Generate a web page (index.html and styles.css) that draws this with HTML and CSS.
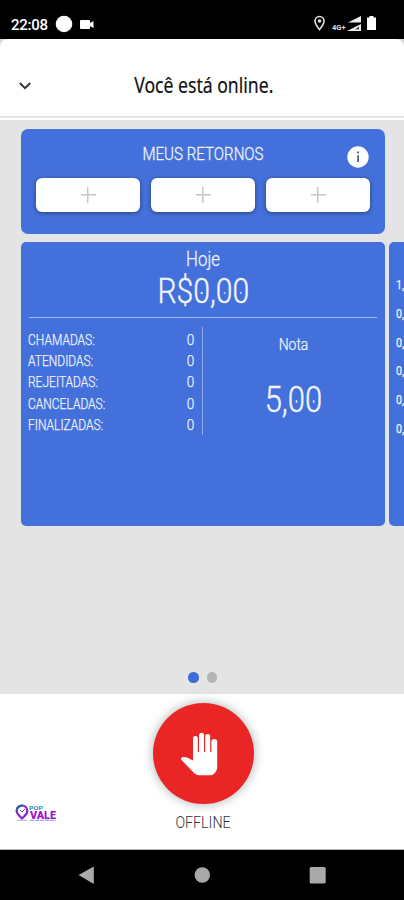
FILE: index.html
```html
<!DOCTYPE html>
<html lang="pt-BR">
<head>
<meta charset="utf-8">
<meta name="viewport" content="width=device-width, initial-scale=1">
<title>Você está online</title>
<link rel="stylesheet" href="styles.css">
</head>
<body>
<div class="phone">
  <div class="status">
    <span class="clock">22:08</span>
    <svg class="status-left" width="40" height="20" viewBox="0 0 40 20"><circle cx="9" cy="10" r="8.3" fill="#fff"/><path d="M26 6h8q1 0 1 1v2l3.500-2v7l-3.500-2v2q0 1-1 1h-8q-1 0-1-1V7q0-1 1-1z" fill="#fff"/></svg>
    <svg class="status-right" width="66" height="18" viewBox="0 0 66 18"><path d="M5.500 1.500a4.500 4.500 0 0 0-4.500 4.500c0 3.200 4.500 8.500 4.500 8.500s4.500-5.300 4.500-8.500a4.500 4.500 0 0 0-4.500-4.500z" fill="none" stroke="#e4e4e4" stroke-width="1.600"/><circle cx="5.500" cy="6" r="1.800" fill="#ddd"/><text class="net" x="18" y="15">4G+</text><path d="M34 7.500 47 1v6.500z" fill="#eee"/><path d="M33 16 47 9v7z" fill="#eee"/><path d="M41 14.500l4-3v3z" fill="#444"/><path d="M53 2.500h2.500V1h4v1.500H62V15h-9z" fill="#fff"/></svg>
  </div>
  <header class="header">
    <svg class="chevron" width="14" height="10" viewBox="0 0 14 10"><path d="M.8 2 6 7.200 11.200 2" fill="none" stroke="#333" stroke-width="1.900"/></svg>
    <h1 class="title">Você está online.</h1>
  </header>
  <main class="content">
    <section class="returns">
      <h2 class="returns-title">MEUS RETORNOS</h2>
      <svg class="info" width="22" height="22" viewBox="0 0 22 22"><circle cx="11" cy="11" r="10.700" fill="#fff"/><path d="M10.200 5.500h1.800v2h-1.800zM10.200 9.200h1.800v6.800h-1.800z" fill="#53658f"/></svg>
      <div class="slots">
        <div class="slot"><i class="plus"></i></div>
        <div class="slot"><i class="plus"></i></div>
        <div class="slot"><i class="plus"></i></div>
      </div>
    </section>
    <div class="carousel">
      <section class="today">
        <h2 class="day">Hoje</h2>
        <div class="amount"><span class="num">R$<b>0</b>,<b>0</b><b>0</b></span></div>
        <div class="details">
          <dl class="counts">
            <div><dt>CHAMADAS:</dt><dd>0</dd></div>
            <div><dt>ATENDIDAS:</dt><dd>0</dd></div>
            <div><dt>REJEITADAS:</dt><dd>0</dd></div>
            <div><dt>CANCELADAS:</dt><dd>0</dd></div>
            <div><dt>FINALIZADAS:</dt><dd>0</dd></div>
          </dl>
          <div class="rating"><div class="label">Nota</div><div class="score"><span class="num">5,<b>0</b><b>0</b></span></div></div>
        </div>
      </section>
      <section class="chart"><span>1,0</span><span>0,8</span><span>0,6</span><span>0,4</span><span>0,2</span><span>0,0</span></section>
    </div>
    <div class="pager"><i class="dot active"></i><i class="dot"></i></div>
  </main>
  <footer class="footer">
    <div class="power">
      <svg width="40" height="44" viewBox="0 0 40 44"><path d="M13 26V6.500a2.400 2.400 0 0 1 4.800 0V20h1.200V3.300a2.500 2.500 0 0 1 5 0V20h1.200V4.500a2.500 2.500 0 0 1 5 0V20h1.200V10a2.900 2.900 0 0 1 5.800 0V35q0 4-3.500 7l-2 1.300H18.500q-2.500-.3-4.500-2.300L1.300 27.800q-1-2.300 1.700-2.800 2.500-.2 4.500.8l5.500 2.600z" fill="#fff"/></svg>
    </div>
    <div class="state">OFFLINE</div>
    <svg class="logo" width="44" height="20" viewBox="0 0 44 20"><path d="M8 1.500a5.300 5.300 0 0 0-5.300 5.300Q2.700 10 8 14.500q5.300-4.500 5.300-7.700A5.300 5.300 0 0 0 8 1.500z" fill="none" stroke="#8a25c8" stroke-width="2.200"/><path d="M2.700 7a5.200 5.200 0 0 1 6-5.300" fill="none" stroke="#2b62b5" stroke-width="2.200"/><path d="M6 6l2 2 3-3" fill="none" stroke="#7b54b5"/><path d="M3 16.300h10" stroke="#9fb4e0" stroke-width="1"/><text class="logo-top" x="15" y="5.800" textLength="14" lengthAdjust="spacingAndGlyphs">POP</text><text class="logo-main" x="16" y="14.800" textLength="26" lengthAdjust="spacingAndGlyphs">VALE</text><path d="M16 16.300h26" stroke="#8b8be0" stroke-dasharray="4 1"/></svg>
  </footer>
  <nav class="nav">
    <svg width="404" height="50" viewBox="0 0 404 50"><path d="M78.500 25 93.800 16.500V34z" fill="#a9a9a9"/><circle cx="202.300" cy="25" r="7.700" fill="#a9a9a9"/><rect x="309.700" y="17" width="16" height="16.500" rx="1.500" fill="#a9a9a9"/></svg>
  </nav>
</div>
</body>
</html>
```
FILE: styles.css
```css
* { box-sizing: border-box; }
body { margin: 0; background: #000; font-family: Roboto, sans-serif; }
h1, h2, dl, dd { margin: 0; font-weight: 300; }
svg { display: block; flex: none; }
.phone { width: 404px; height: 900px; display: flex; flex-direction: column; overflow: hidden; background: #d9d9d9; }

.status { height: 39px; padding: 9px 24px 0 11px; display: flex; align-items: center; background: #000; color: #fff; }
.clock { width: 37px; margin-right: 7px; font-size: 15px; line-height: 18px; padding-top: 1px; font-weight: 500; letter-spacing: -.25px; }
.status-right { margin-left: auto; }
.net { font: 700 7.500px Roboto, sans-serif; fill: #ddd; }

.header { height: 81px; padding: 2px 19px 0; display: flex; align-items: center; background: linear-gradient(#fff 77px, #e6e6e6 77px 79px, #fff 79px); border-radius: 8px 8px 0 0; }
.chevron { margin-top: 11px; }
.title { flex: 1; padding-right: 13px; margin-top: 6px; text-align: center; font-family: "Noto Sans", sans-serif; font-size: 22px; line-height: 30px; font-weight: 400; color: #111; transform: scaleX(.8); -webkit-text-stroke: .2px; }

.content { height: 574px; padding: 9px 0 0 21px; background: #e4e4e4; display: flex; flex-direction: column; color: #f1f5ff; }
.returns { position: relative; width: 364px; height: 105px; padding: 12px 15px 0; border-radius: 7px; background: #4470db; }
.returns-title { font-size: 19px; line-height: 26px; text-align: center; transform: scaleX(.795); -webkit-text-stroke: .3px; }
.info { position: absolute; right: 16px; top: 17px; }
.slots { display: flex; gap: 11px; margin-top: 11px; }
.slot { flex: 1; height: 34px; border-radius: 6px; background: #fff; box-shadow: 0 1px 4px rgba(30, 40, 70, .65); display: grid; place-items: center; }
.plus { width: 15px; height: 16px; background: linear-gradient(#c6c6c6, #c6c6c6) center / 15px 1.500px no-repeat, linear-gradient(#c6c6c6, #c6c6c6) center / 1.500px 16px no-repeat; }

.carousel { display: flex; gap: 4px; margin-top: 8px; overflow: hidden; }
.today { flex: none; width: 364px; height: 284px; padding: 4px 8px 0; border-radius: 5px; background: #4470db; }
.day { font-size: 20px; line-height: 26px; text-align: center; transform: scaleX(.84); -webkit-text-stroke: .3px; }
.amount { height: 46px; border-bottom: 1.500px solid #a5bcf0; text-align: center; font-size: 35px; line-height: 40px; font-weight: 300; }
.num { display: inline-block; transform: scaleX(.86); -webkit-text-stroke: .4px; }
.num b { position: relative; font-weight: 300; }
.num b::after { content: ""; position: absolute; left: calc(50% - 1px); top: 50%; width: 2.500px; height: 2.500px; border-radius: 50%; background: #dce7ff; }
.details { display: flex; padding-top: 9px; }
.counts { width: 174px; height: 108px; padding: 3px 8px 0 0; border-right: 1.500px solid #8eabea; font-size: 15px; line-height: 21.200px; -webkit-text-stroke: .25px; }
.counts div { display: flex; justify-content: space-between; }
.counts dt { transform: translateX(-1px) scaleX(.8); transform-origin: left; font-weight: 300; }
.counts dd { transform: scaleX(.9); transform-origin: right; }
.rating { flex: 1; text-align: center; padding: 7px 0 0 7px; }
.label { font-size: 16px; line-height: 22px; font-weight: 300; transform: scaleX(.87); -webkit-text-stroke: .25px; }
.score { margin-top: 22px; font-size: 36px; line-height: 44px; font-weight: 300; }
.chart { flex: none; width: 364px; height: 284px; padding: 29px 7px; border-radius: 5px; background: #4470db; display: flex; flex-direction: column; font-size: 12.500px; line-height: 28.800px; }
.chart span { transform: scaleX(.85); transform-origin: left; -webkit-text-stroke: .25px; }
.pager { display: flex; justify-content: center; gap: 8px; margin: 146px 20px 0 0; }
.dot { width: 10.500px; height: 10.500px; border-radius: 50%; background: #b5b5b5; }
.dot.active { background: #3c6bdc; }

.footer { position: relative; height: 156px; padding: 9px 0 0 2px; background: #fff; border-bottom: 1px solid #b5b9b9; display: flex; flex-direction: column; align-items: center; }
.power { width: 101px; height: 101px; border-radius: 50%; background: #e92525; box-shadow: 0 0 9px 2px rgba(120, 135, 135, .45); display: grid; place-items: center; padding-right: 7px; }
.state { margin-top: 8px; font-size: 16px; line-height: 22px; font-weight: 300; color: #333; transform: scaleX(.89); }
.logo { position: absolute; left: 14px; top: 110px; }
.logo-top { font: 700 5.500px Roboto, sans-serif; fill: #2d8cb8; }
.logo-main { font: 900 10px Roboto, sans-serif; fill: #9d13cf; }
.nav { height: 50px; background: #000; }
```
